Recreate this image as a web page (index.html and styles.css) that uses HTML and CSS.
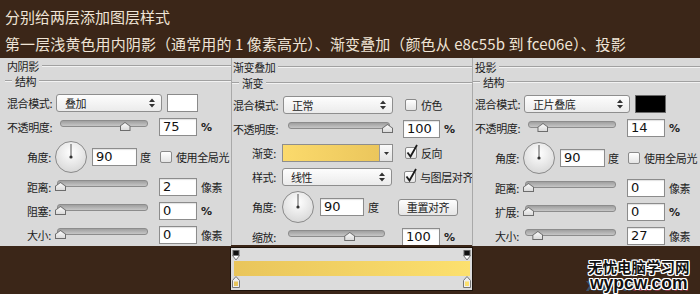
FILE: index.html
```html
<!DOCTYPE html>
<html lang="zh-CN">

<head>
    <meta charset="UTF-8">
    <meta name="viewport" content="width=device-width, initial-scale=1.0">
    <title>图层样式</title>
    <link rel="stylesheet" href="styles.css">
</head>

<body>
    <p class="title first">分别给两层添加图层样式</p>
    <p class="title second">第一层浅黄色用内阴影（通常用的 1 像素高光）、渐变叠加（颜色从 e8c55b 到 fce06e）、投影</p>

    <div class="panels">
        <!-- 内阴影 -->
        <section class="panel inner">
            <div class="head">
                <div class="legend">内阴影</div>
                <div class="legend group">结构</div>
            </div>
            <div class="row">
                <span class="label mode">混合模式:</span>
                <div class="select"><span>叠加</span>
                    <svg width="6" height="10" viewBox="0 0 6 10"><path d="M0 4L3 0.5L6 4ZM0 6L3 9.5L6 6Z" fill="#333"/></svg>
                </div>
                <span class="swatch"></span>
            </div>
            <div class="row">
                <span class="label opacity">不透明度:</span>
                <div class="slider"><div class="range"><span class="knob" style="left: 75%"></span></div></div>
                <span class="field">75</span>
                <span class="unit pct">%</span>
            </div>
            <div class="row indent dial-row">
                <span class="label angle">角度:</span>
                <svg class="dial" width="32" height="32" viewBox="0 0 32 32">
                    <defs><radialGradient id="dialA" cx="50%" cy="35%" r="65%"><stop offset="0" stop-color="#fff"/><stop offset="1" stop-color="#d8d8d8"/></radialGradient></defs>
                    <circle cx="16" cy="16" r="15.5" fill="url(#dialA)" stroke="#8a8a8a"/>
                    <line x1="16" y1="16" x2="16" y2="3" stroke="#555" stroke-width="1"/>
                    <circle cx="16" cy="16" r="1.6" fill="#333"/>
                </svg>
                <span class="field">90</span>
                <span class="unit">度</span>
                <span class="check"></span>
                <span class="text">使用全局光</span>
            </div>
            <div class="row indent metric">
                <span class="label metric">距离:</span>
                <div class="slider"><div class="range"><span class="knob" style="left: 0%"></span></div></div>
                <span class="field">2</span>
                <span class="unit">像素</span>
            </div>
            <div class="row indent metric">
                <span class="label metric">阻塞:</span>
                <div class="slider"><div class="range"><span class="knob" style="left: 0%"></span></div></div>
                <span class="field">0</span>
                <span class="unit pct">%</span>
            </div>
            <div class="row indent metric">
                <span class="label metric">大小:</span>
                <div class="slider"><div class="range"><span class="knob" style="left: 0%"></span></div></div>
                <span class="field">0</span>
                <span class="unit">像素</span>
            </div>
        </section>

        <!-- 渐变叠加 -->
        <div class="column">
            <section class="panel gradient">
                <div class="head">
                    <div class="legend">渐变叠加</div>
                    <div class="legend group">渐变</div>
                </div>
                <div class="row">
                    <span class="label mode">混合模式:</span>
                    <div class="select"><span>正常</span>
                        <svg width="6" height="10" viewBox="0 0 6 10"><path d="M0 4L3 0.5L6 4ZM0 6L3 9.5L6 6Z" fill="#333"/></svg>
                    </div>
                    <span class="check"></span>
                    <span class="text">仿色</span>
                </div>
                <div class="row">
                    <span class="label opacity">不透明度:</span>
                    <div class="slider"><div class="range"><span class="knob" style="left: 100%"></span></div></div>
                    <span class="field">100</span>
                    <span class="unit pct">%</span>
                </div>
                <div class="row indent">
                    <span class="label angle">渐变:</span>
                    <div class="gradbox">
                        <span class="fill"></span>
                        <span class="drop"><svg width="5" height="3" viewBox="0 0 5 3"><path d="M0 0H5L2.5 3Z" fill="#333"/></svg></span>
                    </div>
                    <span class="check on"><svg width="14" height="15" viewBox="0 0 14 15"><path d="M2.5 8.5L5.5 12.5L12 1" fill="none" stroke="#1b1b1b" stroke-width="1.8"/></svg></span>
                    <span class="text">反向</span>
                </div>
                <div class="row indent">
                    <span class="label angle">样式:</span>
                    <div class="select"><span>线性</span>
                        <svg width="6" height="10" viewBox="0 0 6 10"><path d="M0 4L3 0.5L6 4ZM0 6L3 9.5L6 6Z" fill="#333"/></svg>
                    </div>
                    <span class="check on"><svg width="14" height="15" viewBox="0 0 14 15"><path d="M2.5 8.5L5.5 12.5L12 1" fill="none" stroke="#1b1b1b" stroke-width="1.8"/></svg></span>
                    <span class="text">与图层对齐</span>
                </div>
                <div class="row indent dial-row">
                    <span class="label angle">角度:</span>
                    <svg class="dial" width="32" height="32" viewBox="0 0 32 32">
                        <defs><radialGradient id="dialB" cx="50%" cy="35%" r="65%"><stop offset="0" stop-color="#fff"/><stop offset="1" stop-color="#d8d8d8"/></radialGradient></defs>
                        <circle cx="16" cy="16" r="15.5" fill="url(#dialB)" stroke="#8a8a8a"/>
                        <line x1="16" y1="16" x2="16" y2="3" stroke="#555" stroke-width="1"/>
                        <circle cx="16" cy="16" r="1.6" fill="#333"/>
                    </svg>
                    <span class="field">90</span>
                    <span class="unit">度</span>
                    <span class="button">重置对齐</span>
                </div>
                <div class="row indent scale">
                    <span class="label scale">缩放:</span>
                    <div class="slider"><div class="range"><span class="knob" style="left: 64%"></span></div></div>
                    <span class="field">100</span>
                    <span class="unit pct">%</span>
                </div>
            </section>

            <div class="strip">
                <div class="stops">
                    <svg width="8" height="11" viewBox="0 0 8 11"><rect x="1" y="0.5" width="6" height="5" fill="#111" stroke="#666"/><path d="M0.5 5.5H7.5L4 10Z" fill="#fff" stroke="#777"/></svg>
                    <svg width="8" height="11" viewBox="0 0 8 11"><rect x="1" y="0.5" width="6" height="5" fill="#111" stroke="#666"/><path d="M0.5 5.5H7.5L4 10Z" fill="#fff" stroke="#777"/></svg>
                </div>
                <div class="bar"></div>
                <div class="stops">
                    <svg width="8" height="12" viewBox="0 0 8 12"><path d="M0.5 11.5V4.5L4 0.5L7.5 4.5V11.5Z" fill="#efefef" stroke="#777"/><rect x="2" y="5.5" width="4" height="4.5" fill="#e8c55b"/></svg>
                    <svg width="8" height="12" viewBox="0 0 8 12"><path d="M0.5 11.5V4.5L4 0.5L7.5 4.5V11.5Z" fill="#efefef" stroke="#777"/><rect x="2" y="5.5" width="4" height="4.5" fill="#fce06e"/></svg>
                </div>
            </div>
        </div>

        <!-- 投影 -->
        <section class="panel shadow">
            <div class="head">
                <div class="legend">投影</div>
                <div class="legend group">结构</div>
            </div>
            <div class="row">
                <span class="label mode">混合模式:</span>
                <div class="select"><span>正片叠底</span>
                    <svg width="6" height="10" viewBox="0 0 6 10"><path d="M0 4L3 0.5L6 4ZM0 6L3 9.5L6 6Z" fill="#333"/></svg>
                </div>
                <span class="swatch black"></span>
            </div>
            <div class="row">
                <span class="label opacity">不透明度:</span>
                <div class="slider"><div class="range"><span class="knob" style="left: 14%"></span></div></div>
                <span class="field">14</span>
                <span class="unit pct">%</span>
            </div>
            <div class="row indent dial-row">
                <span class="label angle">角度:</span>
                <svg class="dial" width="32" height="32" viewBox="0 0 32 32">
                    <defs><radialGradient id="dialC" cx="50%" cy="35%" r="65%"><stop offset="0" stop-color="#fff"/><stop offset="1" stop-color="#d8d8d8"/></radialGradient></defs>
                    <circle cx="16" cy="16" r="15.5" fill="url(#dialC)" stroke="#8a8a8a"/>
                    <line x1="16" y1="16" x2="16" y2="3" stroke="#555" stroke-width="1"/>
                    <circle cx="16" cy="16" r="1.6" fill="#333"/>
                </svg>
                <span class="field">90</span>
                <span class="unit">度</span>
                <span class="check"></span>
                <span class="text">使用全局光</span>
            </div>
            <div class="row indent metric">
                <span class="label metric">距离:</span>
                <div class="slider"><div class="range"><span class="knob" style="left: 0%"></span></div></div>
                <span class="field">0</span>
                <span class="unit">像素</span>
            </div>
            <div class="row indent metric">
                <span class="label metric">扩展:</span>
                <div class="slider"><div class="range"><span class="knob" style="left: 0%"></span></div></div>
                <span class="field">0</span>
                <span class="unit pct">%</span>
            </div>
            <div class="row indent metric">
                <span class="label metric">大小:</span>
                <div class="slider"><div class="range"><span class="knob" style="left: 11%"></span></div></div>
                <span class="field">27</span>
                <span class="unit">像素</span>
            </div>
        </section>
    </div>

    <div class="watermark">
        <span class="ghost"><span class="blue">xuexi</span>la.com</span>
        <span class="cn">无忧电脑学习网</span>
        <span class="en">wypcw.com</span>
    </div>
</body>

</html>
```

FILE: styles.css
```css
* {
    box-sizing: border-box;
}

body {
    margin: 0;
    width: 700px;
    height: 294px;
    overflow: hidden;
    position: relative;
    background-color: #3b2618;
    font-family: "Noto Sans CJK SC", "Noto Sans", sans-serif;
}

.title {
    margin: 0;
    padding-left: 5px;
    font-size: 15px;
    line-height: 20px;
    color: #efe4d6;
    white-space: nowrap;
}

.title.first {
    padding-top: 7px;
}

.title.second {
    margin-top: 7px;
    letter-spacing: 0.1px;
}

.panels {
    display: flex;
    align-items: flex-start;
    margin-top: 4px;
}

/* panels */

.panel {
    display: flex;
    flex-direction: column;
    gap: 6px;
    height: 188px;
    background-color: #d9d9d9;
    color: #1d1d1d;
    font-size: 11px;
    letter-spacing: -0.4px;
    line-height: 14px;
    white-space: nowrap;
    overflow: hidden;
}

.panel.inner {
    width: 231px;
    padding-left: 5px;
}

.column {
    width: 241px;
    display: flex;
    flex-direction: column;
}

.panel.gradient {
    height: 187px;
    border-left: 1px solid #a9a9a9;
}

.panel.shadow {
    width: 228px;
    border-left: 1px solid #a9a9a9;
}

.head {
    display: flex;
    flex-direction: column;
    height: 30px;
    flex-shrink: 0;
}

.shadow .head {
    height: 31px;
}

.gradient .head {
    height: 32px;
}

.legend {
    display: flex;
    align-items: center;
    height: 20px;
    padding-left: 2px;
}

.gradient .legend {
    padding-left: 1px;
}

.legend::after {
    content: "";
    flex: 1;
    margin-left: 3px;
    border-top: 1px solid #a1a1a1;
    border-bottom: 1px solid #f2f2f2;
}

.legend.group,
.gradient .legend.group {
    flex: 1;
    height: auto;
    padding-left: 0;
}

.legend.group::before {
    content: "";
    width: 7px;
    margin-right: 3px;
    border-top: 1px solid #a1a1a1;
    border-bottom: 1px solid #f2f2f2;
}

/* rows */

.row {
    display: flex;
    align-items: center;
    height: 18px;
    flex-shrink: 0;
    padding-left: 2px;
}

.row.indent {
    padding-left: 22px;
}

.row.dial-row {
    height: 30px;
}

.gradient .row {
    padding-left: 1px;
}

.gradient .row.indent {
    padding-left: 20px;
}

.label {
    flex-shrink: 0;
}

.label.mode {
    width: 49px;
}

.gradient .label.mode {
    width: 50px;
}

.label.opacity {
    width: 53px;
}

.gradient .label.opacity {
    width: 55px;
}

.label.angle {
    width: 28px;
}

.gradient .label.angle {
    width: 30px;
}

.label.metric {
    width: 30px;
}

.label.scale {
    width: 36px;
}

/* controls */

.select {
    display: flex;
    align-items: center;
    justify-content: space-between;
    flex-shrink: 0;
    width: 106px;
    height: 18px;
    padding: 0 6px 0 8px;
    border: 1px solid #8e8e8e;
    border-radius: 3px;
    background: linear-gradient(#fdfdfd, #ebebeb);
}

.gradient .select {
    width: 110px;
}

.swatch {
    width: 31px;
    height: 18px;
    margin-left: 5px;
    border: 1px solid #8a8a8a;
    background-color: #fff;
}

.swatch.black {
    background-color: #000;
    border-color: #6a6a6a;
}

.slider {
    position: relative;
    flex-shrink: 0;
    width: 88px;
    height: 18px;
    padding: 0 3px;
}

.slider::before {
    content: "";
    position: absolute;
    left: 0;
    right: 0;
    top: 2px;
    height: 5px;
    border: 1px solid #8c8c8c;
    border-radius: 3px;
    background: linear-gradient(#9f9f9f, #c6c6c6);
}

.row.metric .slider {
    width: 91px;
}

.gradient .slider {
    width: 102px;
}

.row.scale .slider {
    width: 97px;
}

.range {
    position: relative;
    height: 100%;
}

.knob {
    position: absolute;
    top: 4px;
    width: 11px;
    height: 9px;
    margin-left: -5px;
    background-color: #6c6c6c;
    clip-path: polygon(50% 0, 100% 45%, 100% 100%, 0 100%, 0 45%);
}

.knob::after {
    content: "";
    position: absolute;
    inset: 1px;
    background: linear-gradient(#fbfbfb, #dadada);
    clip-path: polygon(50% 0, 100% 45%, 100% 100%, 0 100%, 0 45%);
}

.field {
    flex-shrink: 0;
    width: 38px;
    height: 18px;
    padding-left: 3px;
    border: 1px solid #8c8c8c;
    background-color: #fff;
    box-shadow: inset 0 1px 1px rgba(0, 0, 0, 0.12);
    font: 13px/16px "DejaVu Sans", sans-serif;
    letter-spacing: 0;
    color: #111;
}

.slider + .field {
    margin-left: 11px;
}

.gradient .slider + .field {
    width: 37px;
    margin-left: 13px;
}

.row.scale .slider + .field {
    width: 38px;
    margin-left: 17px;
}

.field + .unit {
    margin-left: 4px;
}

.unit.pct {
    font: bold 11px "DejaVu Sans", sans-serif;
    color: #222;
}

.dial {
    flex-shrink: 0;
}

.dial + .field {
    width: 45px;
    margin-left: 5px;
}

.gradient .dial + .field {
    width: 44px;
    margin-left: 6px;
}

.row.dial-row .field + .unit {
    width: 12px;
    margin-left: 3px;
}

.gradient .row.dial-row .field + .unit {
    margin-left: 4px;
}

.check {
    position: relative;
    flex-shrink: 0;
    width: 12px;
    height: 12px;
    border: 1px solid #8a8a8a;
    border-radius: 2px;
    background: linear-gradient(#ffffff, #e4e4e4);
}

.check svg {
    position: absolute;
    left: -1px;
    top: -4px;
}

.row.dial-row .check {
    margin-left: 8px;
}

.select + .check,
.gradbox + .check {
    margin-left: 12px;
}

.check + .text {
    margin-left: 4px;
}

.button {
    flex-shrink: 0;
    width: 60px;
    height: 17px;
    margin-left: 18px;
    border: 1px solid #8a8a8a;
    border-radius: 3px;
    background: linear-gradient(#fdfdfd, #e6e6e6);
    text-align: center;
    line-height: 15px;
}

.gradbox {
    display: flex;
    flex-shrink: 0;
    width: 111px;
    height: 18px;
    border: 1px solid #8e8e8e;
}

.gradbox .fill {
    flex: 1;
    background: linear-gradient(90deg, #fbda6c, #ebc65c);
}

.gradbox .drop {
    display: flex;
    align-items: center;
    justify-content: center;
    width: 13px;
    border-left: 1px solid #9a9a9a;
    background: linear-gradient(#fbfbfb, #e2e2e2);
}

/* gradient editor strip */

.strip {
    display: flex;
    flex-direction: column;
    height: 44px;
    margin: 2px -1px 0;
    padding: 2px 1px;
    border: 1px solid #1d120a;
    background-color: #dcdcdc;
}

.stops {
    display: flex;
    justify-content: space-between;
    height: 11px;
}

.stops:last-child {
    height: 12px;
}

.bar {
    height: 15px;
    margin: 0 1px 0 2px;
    background: linear-gradient(90deg, #e9c55b, #fce06e);
}

/* watermark */

.watermark {
    position: absolute;
    left: 586px;
    top: 257px;
    display: flex;
    flex-direction: column;
    align-items: flex-start;
}

.watermark .cn {
    position: relative;
    padding-left: 2px;
    font-size: 14.5px;
    font-weight: bold;
    line-height: 19px;
    color: #111;
    text-shadow: 1px 0 0 #fff, -1px 0 0 #fff, 0 1px 0 #fff, 0 -1px 0 #fff, 1px 1px 0 #fff, -1px -1px 0 #fff, 1px -1px 0 #fff, -1px 1px 0 #fff;
}

.watermark .en {
    position: relative;
    padding-left: 4px;
    font: bold 17.5px/15px "Liberation Sans", sans-serif;
    color: #111;
    text-shadow: 1px 0 0 #fff, -1px 0 0 #fff, 0 1px 0 #fff, 0 -1px 0 #fff, 1px 1px 0 #fff, -1px -1px 0 #fff, 1px -1px 0 #fff, -1px 1px 0 #fff;
}

.watermark .ghost {
    position: absolute;
    left: 0;
    top: 19px;
    font: bold 18px/18px "Liberation Sans", sans-serif;
    color: #a33a58;
    opacity: 0.7;
}

.watermark .ghost .blue {
    color: #3c6488;
}
```
